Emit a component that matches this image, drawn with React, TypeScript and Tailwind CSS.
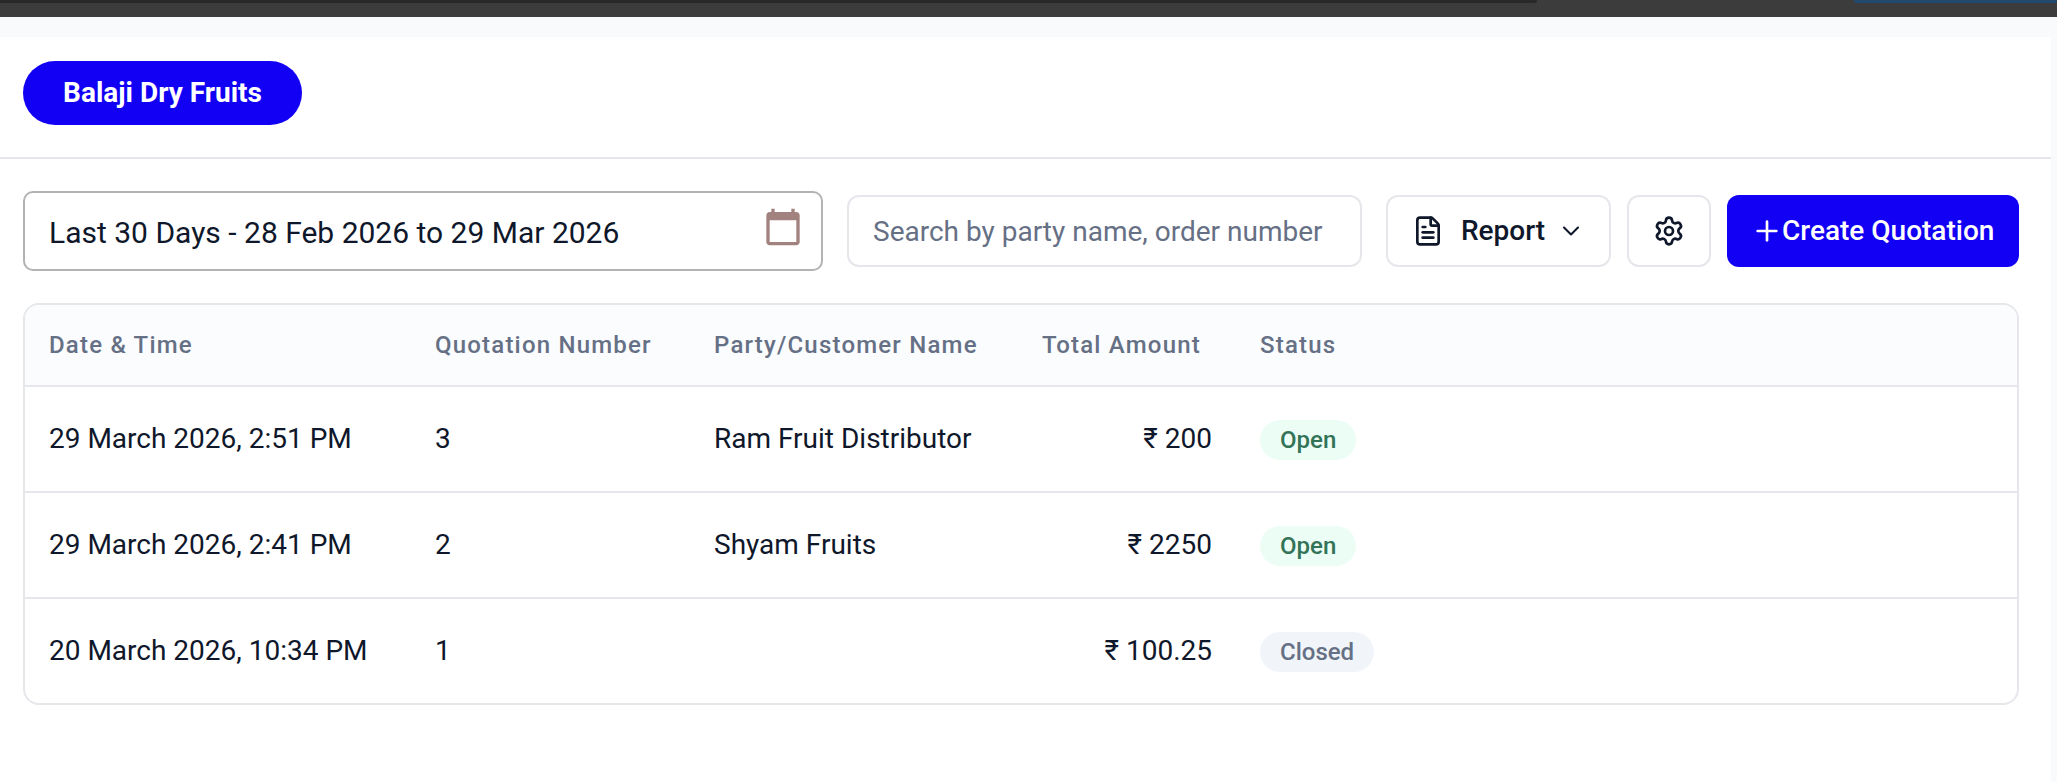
import React from 'react';
import { ChevronDown, FileText, Plus, Settings } from 'lucide-react';

type Status = 'Open' | 'Closed';

interface Quotation {
  date: string;
  number: number;
  party: string;
  amount: string;
  status: Status;
}

const quotations: Quotation[] = [
  { date: '29 March 2026, 2:51 PM', number: 3, party: 'Ram Fruit Distributor', amount: '200', status: 'Open' },
  { date: '29 March 2026, 2:41 PM', number: 2, party: 'Shyam Fruits', amount: '2250', status: 'Open' },
  { date: '20 March 2026, 10:34 PM', number: 1, party: '', amount: '100.25', status: 'Closed' },
];

const statusStyles: Record<Status, string> = {
  Open: 'bg-[#ecfdf5] text-[#337357]',
  Closed: 'bg-[#f1f5f9] text-[#667085]',
};

const CalendarIcon = () => (
  <svg viewBox="0 0 24 24" className="size-10 shrink-0 fill-[#a1827f]">
    <path d="M20 3h-1V1h-2v2H7V1H5v2H4c-1.1 0-2 .9-2 2v16c0 1.1.9 2 2 2h16c1.1 0 2-.9 2-2V5c0-1.1-.9-2-2-2zm0 18H4V8h16v13z" />
  </svg>
);

const Toolbar = () => (
  <div className="flex items-center pl-[23px] mt-8">
    <button className="flex h-20 w-[800px] items-start justify-between rounded-[10px] border-2 border-[#b3b3b3] bg-white pt-3.5 pr-[18px] pl-6">
      <span className="mt-1 text-[30px] leading-[44px] text-slate-900">Last 30 Days - 28 Feb 2026 to 29 Mar 2026</span>
      <CalendarIcon />
    </button>
    <input
      className="ml-6 h-[72px] w-[515px] rounded-xl border-2 border-gray-200 px-6 text-[28px] text-slate-900 placeholder:text-[#667085] outline-none"
      placeholder="Search by party name, order number"
    />
    <button className="ml-6 flex h-[72px] w-[225px] items-center rounded-xl border-2 border-gray-200 pl-6 text-[28px] font-medium text-slate-900">
      <FileText size={32} />
      <span className="ml-[17px]">Report</span>
      <ChevronDown size={28} strokeWidth={1.8} className="ml-3" />
    </button>
    <button className="ml-4 flex h-[72px] w-[84px] items-center justify-center rounded-xl border-2 border-gray-200 text-slate-900">
      <Settings size={32} />
    </button>
    <button className="ml-4 flex h-[72px] w-[292px] items-center rounded-xl bg-[#1200f5] pl-6 text-[28px] font-medium text-white">
      <Plus size={32} strokeWidth={2} />
      <span className="-ml-px whitespace-nowrap">Create Quotation</span>
    </button>
  </div>
);

const QuotationTable = () => (
  <div className="ml-[23px] mt-8 w-[1996px] overflow-hidden rounded-2xl border-2 border-gray-200">
    <div className="grid h-20 grid-cols-[386px_279px_329px_217px_1fr] items-center bg-[#fafcfe] text-2xl font-medium tracking-[1.2px] text-[#667085]">
      <span className="px-6">Date &amp; Time</span>
      <span className="px-6">Quotation Number</span>
      <span className="px-6">Party/Customer Name</span>
      <span className="whitespace-nowrap pl-[23px]">Total Amount</span>
      <span className="px-6">Status</span>
    </div>
    {quotations.map((q) => (
      <div
        key={q.number}
        className="grid h-[106px] grid-cols-[386px_279px_329px_217px_1fr] items-center border-t-2 border-gray-200 text-[28px] text-slate-900"
      >
        <span className="whitespace-nowrap pl-6">{q.date}</span>
        <span className="px-6">{q.number}</span>
        <span className="px-6">{q.party}</span>
        <span className="px-6 text-right">₹ {q.amount}</span>
        <span className="px-6 pt-0.5">
          <span className={`flex h-10 w-fit items-center rounded-full px-5 text-2xl font-medium ${statusStyles[q.status]}`}>
            {q.status}
          </span>
        </span>
      </div>
    ))}
  </div>
);

const App = () => {
  return (
    <div className="h-[782px] overflow-hidden bg-[#f9fafb] font-['Roboto',sans-serif]">
      {/* Browser chrome edge */}
      <div className="flex h-[17px] items-start justify-between bg-[#3c3c3c]">
        <div className="h-[3px] w-[1537px] rounded-br-full bg-[#282828]" />
        <div className="h-[3px] w-[203px] rounded-b-full bg-[#204a70]" />
      </div>

      <main className="mt-5 h-[745px] w-[2051px] bg-white">
        <div className="h-[122px] border-b-2 border-gray-200 pl-[23px] pt-6">
          <button className="h-16 w-[279px] rounded-full bg-[#1200f5] text-[28px] font-bold text-white">
            Balaji Dry Fruits
          </button>
        </div>
        <Toolbar />
        <QuotationTable />
      </main>
    </div>
  );
};

export default App;
